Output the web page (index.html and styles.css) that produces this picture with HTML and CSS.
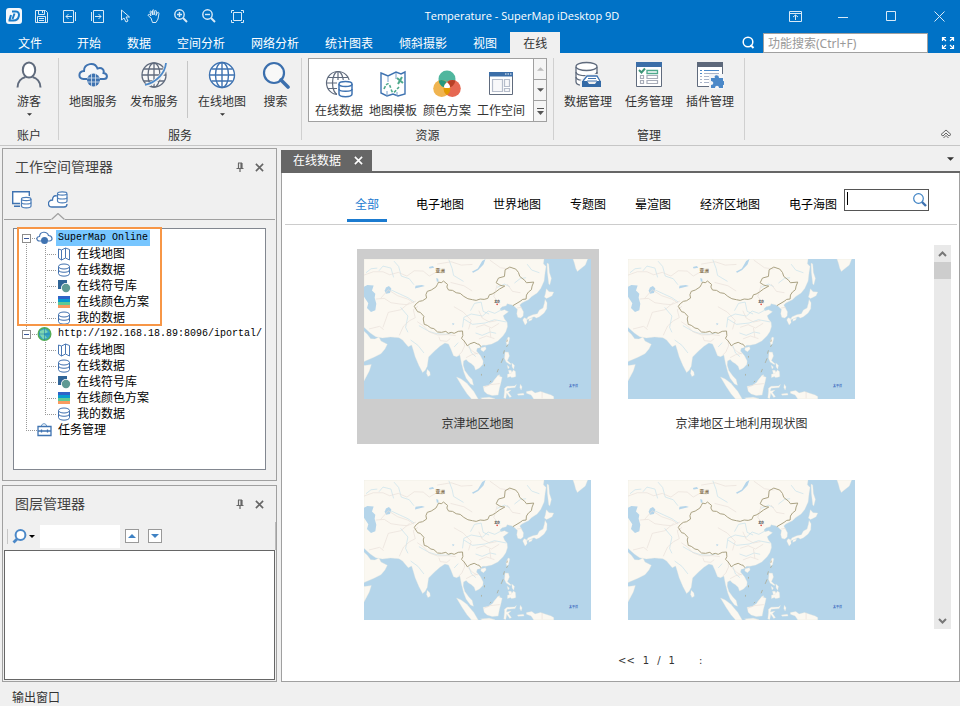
FILE: index.html
```html
<!DOCTYPE html>
<html lang="zh-CN">
<head>
<meta charset="utf-8">
<meta name="viewport" content="width=device-width, initial-scale=1">
<title>Temperature - SuperMap iDesktop 9D</title>
<link rel="stylesheet" href="styles.css">
</head>
<body>

<svg class="sprite" aria-hidden="true">
  <symbol id="i-close" viewBox="0 0 10 10"><path d="M1 1l8 8M9 1l-8 8" fill="none" stroke="currentColor" stroke-width="1.8"/></symbol>
  <symbol id="i-pin" viewBox="0 0 8 10"><path d="M2 1h4M2.500 1v5M5 1v5M6 1v5M0.500 6.500h7M4 6v4" fill="none" stroke="currentColor" stroke-width="1.200"/></symbol>
  <symbol id="i-down" viewBox="0 0 8 4"><path d="M0 0h8L4 4z" fill="currentColor"/></symbol>
  <symbol id="i-magnify" viewBox="0 0 28 28"><circle cx="12" cy="12" r="10" fill="#f8f8f8" stroke="currentColor" stroke-width="2.200"/><path d="M19 19l7 7" stroke="currentColor" stroke-width="3.600" stroke-linecap="round"/></symbol>
  <symbol id="t-map" viewBox="0 0 14 14"><path d="M1.500 2l3 1v10l-3-2zM4.500 3l4-2v10l-4 2M8.500 1l4 1.500v10.500l-4-2" fill="#fff" stroke="#4a78b4"/></symbol>
  <symbol id="t-db" viewBox="0 0 14 14"><path d="M1.500 3.500v7c0 3.500 11 3.500 11 0v-7" fill="#fff" stroke="#3f6fae"/><path d="M1.500 7c0 3 11 3 11 0" fill="none" stroke="#3f6fae"/><ellipse cx="7" cy="3.500" rx="5.500" ry="2.500" fill="#fff" stroke="#3f6fae"/></symbol>
  <symbol id="t-sym" viewBox="0 0 14 14"><path d="M1 1h9v9H1z" fill="#2f6497"/><circle cx="9" cy="9" r="5" fill="#fff"/><circle cx="9" cy="9" r="4.200" fill="#5f9a94"/></symbol>
  <symbol id="t-color" viewBox="0 0 14 14"><path d="M1 1h12v3H1z" fill="#2f63c8"/><path d="M1 4h12v3H1z" fill="#0a9bd0"/><path d="M1 7h12v3H1z" fill="#5fca96"/><path d="M1 10h12v3H1z" fill="#f99b60"/></symbol>
  <symbol id="map" viewBox="0 0 682 420">
    <path fill="#b5d5ea" d="M0 0h682v420H0z"/>
    <g fill="#fbf8f1" stroke="#e6e6df" stroke-width="1">
      <path d="M0 0H541L539 14 547 22 544 40 541 66 531 88 520 102 504 112 494 122 486 126 474 132 468 138 473 147 479 158 478 171 471 177 462 175 459 164 461 151 450 141 443 137 430 134 427 140 415 143 408 150 412 155 422 152 434 158 426 164 418 170 422 180 430 190 431 203 426 218 418 230 402 246 384 255 366 259 356 259 348 266 340 268 338 276 350 290 358 306 357 317 347 327 335 333 331 322 322 314 314 309 307 302 299 306 298 318 303 335 315 351 325 362 329 379 320 375 307 358 300 340 293 314 288 288 278 293 269 290 261 270 254 255 243 252 228 262 211 277 194 294 190 322 184 334 176 341 165 320 154 294 147 270 143 258 133 263 124 253 116 243 105 236 80 234 55 237 35 233 20 223 8 212 0 205z"/>
      <path d="M0 217L10 226 20 239 33 240 45 234 51 246 70 256 63 270 51 284 30 295 0 308z"/>
      <path d="M0 320L22 317 16 336 0 366z"/>
      <path d="M190 331l8 8 1 10-7 4-4-9z"/>
      <path d="M550 12l5 3 2 25 6 18-5 20-3-4-4-34z"/>
      <path d="M628 0h44l-7 18-13 10-11 9-5-10-3-12z"/>
      <path d="M548 89l8 9 14 1-5 11-10 5-7 3-6-4 3-10z"/>
      <path d="M544 121l6 10-1 18-8 13-14 11-9 4-7-4-14 6-8 3 3-8 15-7 14-3 6-11 11-6 4-14z"/>
      <path d="M481 176l8 3 1 12-6 7-7-15zM496 180l10-3-2 6-9 4z"/>
      <path d="M433 234l5 2-4 18-5 5-2-11z"/>
      <path d="M352 266l13-3 2 7-8 8-8-5z"/>
      <path d="M424 279l10 1 3 11-6 14 11 10-3 2-12-8-5-11z"/>
      <path d="M430 319l7 5-4 6zM444 312l8 7-2 12-5-7zM434 334l8 0 4 9-9 4zM408 350l-20 21 2-6 16-18z"/>
      <path d="M431 346l11-3 7-10 6 5 1 15-6 2-7 1-3-3-9 3z"/>
      <path d="M278 354l14 6 17 13 21 25 13 22h-20l-14-16-15-23z"/>
      <path d="M358 382l15-2 14-10 15-20 13 5-4 18-4 15-4 20-18 2-15-5-9-8z"/>
      <path d="M422 388l8-6 22-1 6-4-4 9-24 2-2 8 14-3-8 8 9 12-5 3-9-13-3 16-6-2 2-18z"/>
      <path d="M488 398l16-3 10 7 16-4 32 10 8 5v7h-60l-8-12-14-5z"/>
      <path d="M470 376l5 8-3 9-4-8zM461 405l18-2 2 5-18 1z"/>
      <path d="M350 417l26-2 18 4-10 1h-28z"/>
    </g>
    <g fill="#b5d5ea">
      <path d="M0 83l10-5 19 1-5 15 10 10-2 12 5 18-3 20-13 5-12-12 4-14-13-20z"/>
      <path d="M66 85l9-4 7 7-4 14-12 2-4-9z"/>
      <path d="M324 38l18-10 13-22 10-6-6 16-16 17-15 8z"/>
      <path d="M155 80l19-2 9 3-30 7zM195 24l12-3 4 5-14 2zM265 192l7 2-5 5zM217 57l6 2 1 8-5 1z"/>
    </g>
    <g fill="none" stroke="#c6e1ec" stroke-width="2">
      <path d="M90 6l14 16 8 29 24 8 14 18M255 2l10 27 4 20 30 18M45 35l12-14 24 6 8 28M490 15l14 18 23 8M6 41l15-12 19-2M110 145l22 26-7 34 7 15M165 200l30 17 22 7 27 2 20-4M296 205l4-30 22-10 34 6 17-15 20 7 22-12M320 155l12-22 20-4 6 28 18 8M335 222l20 7 24-10 18 4M452 72l18-14 17-2M300 180l26 16 38-4 28-10 36 7M180 282l-18-23-22-16M271 264l12-13M315 260l8 22 13 11M80 92l28 13 24 11 19 13M400 85l22-10 16 8"/>
    </g>
    <g fill="none" stroke="#e8e0da" stroke-width="2">
      <path d="M0 48l28-10 29 0 20 9 26-7 26 11 22-16 27 1 18 15 21-12 20 4M35 120l26-2 20 13 27 4 22 2 26-11M50 118l23-26 28 18 30 10 19 12M57 205l16-45 38-8 26-22M106 229l13-28 18-16 17-9-6-24 14-10M160 188l19 13 17 18 25 9 32-1 23 3M260 70l40 10 25 16M300 243l2 18-8 18-9 9M310 260l16 17 15 8M307 296l17-9 18-4M225 233l4 12 20 2 10-8M270 143l28 16 24 25-8 27M337 205l24-8 22 10 23-14M345 155l10 22 22 12 21-4M345 240l23-9 24 8M377 207l4 27M400 78l-10 34 18 24M430 75l16 22 24 4M220 15l42-7 30 10 34-2M378 3l32 23 30 4M15 210l32-8 12 10M360 385l20-8 28-3M460 147l14-2M535 398v20"/>
    </g>
    <g fill="none" stroke="#aaa283" stroke-width="3" stroke-linejoin="round">
      <path d="M151 142l6-8 9-7 10-2 12-8-2-10 4-10 12-4 14-9 4-7 4-8 8 2 7-5 12 10-2 8 5 9 12 1 11 7 12 2 11 9 12 7 14 3 11 2 12-4 12 1 11-3 5-11 8-2 10-6 12-9 16-9-8-1-7-2-11-7 7-14 18-5 2-20 14-8 18 6 8 10 4 12 15 12 5 7 22-2-5 12-2 11-9 7-6 9-1 12-10 1-8 6-22 13"/>
      <path d="M151 142l10 16 8 2 11 12-2 8 3 16 9 3 11 8 9 2 11 10 12 1 13-3 7 6 9-3 9 3 12-6 13-1 1 14-4 8 8 8 10 15 6-6 14-5 10 5 5 1 5 7"/>
      <path d="M431 242l-2 7M432 257l-4 7M422 274l-3 10M418 298l-6 14M404 330l-4 10M382 366l-4 4M353 345v5M362 316v6M362 291v5" stroke-width="2"/>
    </g>
    <circle cx="400" cy="136" r="2.500" fill="#e03a30"/>
  </symbol>
</svg>

<header class="titlebar">
  <span class="logo"><svg width="16" height="16" viewBox="0 0 16 16"><rect width="16" height="16" rx="3" fill="#f4f8fc"/><path d="M6 3.500h4c5 0 3.500 9-2.500 9H2.500M5 7l-1.500 5M8.500 5.500l-2 5.500" fill="none" stroke="#1b7cc8" stroke-width="2"/></svg></span>
  <nav class="quick" aria-label="快速访问">
    <button aria-label="保存"><svg width="13" height="13" viewBox="0 0 13 13"><path d="M.5.500h10l2 2v10H.5zM3.500.500v4h6v-4M7.500 1v2M2.500 12.500v-6h8v6M4 8.500h5M4 10.500h5"/></svg></button>
    <button aria-label="向左"><svg width="13" height="13" viewBox="0 0 13 13"><path d="M.5.500h10v12H.5zM12.500 2v9M9 6.500H3M5.500 4L3 6.500 5.500 9"/></svg></button>
    <button aria-label="向右"><svg width="13" height="13" viewBox="0 0 13 13"><path d="M2.500.500h10v12h-10zM.5 2v9M4 6.500h6M7.500 4L10 6.500 7.500 9"/></svg></button>
    <button aria-label="选择"><svg width="11" height="14" viewBox="0 0 11 14"><path d="M1.500 1v10l2.500-2 2 4 2-1-2-4h3.500z"/></svg></button>
    <button aria-label="漫游"><svg width="13" height="14" viewBox="0 0 13 14"><path d="M4 9L1.500 7C.5 6 1.500 5 2.500 5.500L4 7 3 3c0-1 1-1.500 1.500-.5L5.500 6V1.500c0-1 1.500-1 1.500 0V6l1-4c.5-1 1.500-.5 1.500.5L9 6.500l1.500-3c.5-.7 1.500 0 1.500.7L11 10l-2 3.500H5.500z"/></svg></button>
    <button aria-label="放大"><svg width="14" height="14" viewBox="0 0 14 14"><circle cx="5.500" cy="5.500" r="4.700" stroke-width="1.400"/><path d="M3 5.500h5M5.500 3v5" stroke-width="1.400"/><path d="M9 9l4 4" stroke-width="2"/></svg></button>
    <button aria-label="缩小"><svg width="14" height="14" viewBox="0 0 14 14"><circle cx="5.500" cy="5.500" r="4.700" stroke-width="1.400"/><path d="M3 5.500h5" stroke-width="1.400"/><path d="M9 9l4 4" stroke-width="2"/></svg></button>
    <button aria-label="全幅"><svg width="13" height="13" viewBox="0 0 13 13"><path d="M2.500 2.500h8v8h-8zM.5 3V.500H3M10 .500h2.500V3M12.500 10v2.500H10M3 12.500H.5V10"/></svg></button>
  </nav>
  <h1 class="title">Temperature - SuperMap iDesktop 9D</h1>
  <div class="winctl">
    <button aria-label="功能区显示"><svg width="13" height="11" viewBox="0 0 13 11"><path d="M.5.500h12v10H.5zM.5 2.500h12M6.500 9V4M4 6l2.500-2L9 6"/></svg></button>
    <button aria-label="最小化"><svg width="11" height="11" viewBox="0 0 11 11"><path d="M0 6.500h10"/></svg></button>
    <button aria-label="最大化"><svg width="11" height="11" viewBox="0 0 11 11"><path d="M.5.500h9v9h-9z"/></svg></button>
    <button aria-label="关闭"><svg width="11" height="11" viewBox="0 0 11 11"><path d="M.5.500l10 10M10.500.500l-10 10"/></svg></button>
  </div>
</header>

<div class="menubar">
  <nav class="menus">
    <button class="file">文件</button><button>开始</button><button>数据</button><button>空间分析</button><button>网络分析</button><button>统计图表</button><button>倾斜摄影</button><button>视图</button><button class="active">在线</button>
  </nav>
  <label class="find-icon" for="find" aria-label="功能搜索"><svg width="13" height="13" viewBox="0 0 13 13"><circle cx="6" cy="6" r="4.800" fill="none" stroke="#fff" stroke-width="1.500"/><path d="M8.500 9l3 3" stroke="#fff" stroke-width="2"/></svg></label>
  <input id="find" class="find" type="text" placeholder="功能搜索(Ctrl+F)">
  <button class="full" aria-label="全屏"><svg width="14" height="14" viewBox="0 0 14 14"><path d="M1.500 5V1.500H5M2 2l3 3M9 1.500h3.500V5M12 2L9 5M12.500 9v3.500H9M12 12L9 9M5 12.500H1.500V9M2 12l3-3" fill="none" stroke="#fff" stroke-width="1.200"/></svg></button>
</div>

<section class="ribbon">
  <div class="group g-account">
    <div class="tools">
      <button class="tool"><svg width="28" height="28" viewBox="0 0 28 28"><ellipse cx="14" cy="9" rx="6.200" ry="7.500" fill="#fff" stroke="#606b7d" stroke-width="2"/><path d="M2.500 26.500c0-6 4-9.500 8-10.500M25.500 26.500c0-6-4-9.500-8-10.500" fill="none" stroke="#606b7d" stroke-width="2"/></svg><span>游客</span><svg class="drop" width="5" height="3"><use href="#i-down"/></svg></button>
    </div>
    <div class="caption">账户</div>
  </div>
  <div class="group g-service">
    <div class="tools">
      <button class="tool"><svg width="30" height="28" viewBox="0 0 30 28"><path d="M9 18H5.500C0 17.500 0 10.500 6 10 6 2 17 .5 19.500 7.500 24 6 26.500 9 25.500 12c5 1 4 6 .5 6h-4" fill="#f5f6f8" stroke="#3f73b1" stroke-width="2"/><circle cx="15.500" cy="19" r="6.500" fill="#3f73b1"/><path d="M9 17h13M9 21h13M13.500 13v12M17.500 13v12" stroke="#d9e4f0" stroke-width=".8"/></svg><span>地图服务</span></button>
      <button class="tool"><svg width="28" height="28" viewBox="0 0 28 28"><g fill="none" stroke="#606b7d" stroke-width="1.300"><circle cx="14" cy="14" r="12" fill="#f8f8f8"/><ellipse cx="14" cy="14" rx="6" ry="12"/><path d="M14 2v24M2 14h24M4 8h20M4 20h20"/></g><path d="M26 3c0 8-8 18-21 22" fill="none" stroke="#f0f0f0" stroke-width="4"/><path d="M26 2c-1 10-9 19-21 22" fill="none" stroke="#4b88c8" stroke-width="1.800"/></svg><span>发布服务</span></button>
      <i class="rule"></i>
      <button class="tool wide"><svg width="28" height="28" viewBox="0 0 28 28"><g fill="none" stroke="#3f73b1" stroke-width="1.400"><circle cx="14" cy="14" r="12.500" fill="#fff"/><ellipse cx="14" cy="14" rx="6.500" ry="12.500"/><path d="M14 1.500v25M1.500 14h25M3.500 8h21M3.500 20h21"/></g></svg><span>在线地图</span><svg class="drop" width="5" height="3"><use href="#i-down"/></svg></button>
      <button class="tool narrow"><svg class="blue" width="28" height="28"><use href="#i-magnify"/></svg><span>搜索</span></button>
    </div>
    <div class="caption">服务</div>
  </div>
  <div class="group g-resource">
    <div class="gallery">
      <div class="items">
        <button class="tool"><svg width="28" height="28" viewBox="0 0 28 28"><g fill="none" stroke="#606b7d" stroke-width="1.200"><circle cx="13" cy="13" r="11.500"/><ellipse cx="13" cy="13" rx="5.500" ry="11.500"/><path d="M13 1.500v23M1.500 13h23M3 7.500h20M3 18.500h20"/></g><path d="M12 10h16v18H12z" fill="#fff"/><g fill="#fff" stroke="#3f73b1" stroke-width="1.500"><path d="M14 14v10c0 3.500 13 3.500 13 0V14"/><path d="M14 19c0 3 13 3 13 0" fill="none"/><ellipse cx="20.500" cy="14" rx="6.500" ry="2.500"/></g></svg><span>在线数据</span></button>
        <button class="tool"><svg width="28" height="28" viewBox="0 0 28 28"><path d="M2 3l7 3 8-4 5 2 4-2v22l-7 2-5-2-6 2-6-3z" fill="none" stroke="#3f73b1" stroke-width="1.400"/><path d="M9 6v6M17 3v6M8 21v5M18 22v4" stroke="#7aa0ca"/><path d="M5 19c3-7 5-7 7 0s4 2 8-2" fill="none" stroke="#4ea98c" stroke-width="1.600" stroke-dasharray="3 1.500"/><path d="M18 8l6 5M23 7l-4 7" stroke="#4ea98c" stroke-width="2"/></svg><span>地图模板</span></button>
        <button class="tool"><svg width="28" height="28" viewBox="0 0 28 28"><circle cx="14" cy="9" r="8.500" fill="#50b69e"/><circle cx="8.700" cy="18.500" r="8.500" fill="#f0b450"/><circle cx="19.300" cy="18.500" r="8.500" fill="#e66852"/><path d="M5.700 10.500a8.500 8.500 0 0 1 8 1.500 8.500 8.500 0 0 0-3 5.300 8.500 8.500 0 0 1-5-6.800z" fill="#26977c"/><path d="M22.300 10.500a8.500 8.500 0 0 0-8 1.500 8.500 8.500 0 0 1 3 5.300 8.500 8.500 0 0 0 5-6.800z" fill="#b84026"/><path d="M10.800 17.300a8.500 8.500 0 0 0 3.200 7.900 8.500 8.500 0 0 0 3.200-7.900 8.500 8.500 0 0 1-6.400 0z" fill="#e29a00"/><path d="M14 12.200a8.500 8.500 0 0 1 3.200 5.200 8.500 8.500 0 0 1-6.400 0A8.500 8.500 0 0 1 14 12.200z" fill="#fff"/></svg><span>颜色方案</span></button>
        <button class="tool"><svg width="28" height="28" viewBox="0 0 28 28"><path d="M2.500 3.500h23v21h-23z" fill="#fff" stroke="#606b7d"/><path d="M2 2h24v4.500H2z" fill="#3b6ea8"/><path d="M18 4h1.500M20.500 4H22M23 4h1.500" stroke="#fff"/><path d="M5.500 9.500h10v12h-10zM17.500 9.500h5v7h-5zM17.500 18.500h5v3h-5z" fill="#f8f8fa" stroke="#b6bdcb" stroke-width="1.200"/></svg><span>工作空间</span></button>
      </div>
      <div class="spin">
        <button aria-label="上一行" class="off"><svg width="7" height="4" viewBox="0 0 8 4"><path d="M0 4h8L4 0z" fill="currentColor"/></svg></button>
        <button aria-label="下一行"><svg width="7" height="4"><use href="#i-down"/></svg></button>
        <button aria-label="更多"><svg width="7" height="7" viewBox="0 0 7 7"><path d="M0 .500h7" stroke="currentColor"/><path d="M0 3h7L3.500 7z" fill="currentColor"/></svg></button>
      </div>
    </div>
    <div class="caption">资源</div>
  </div>
  <div class="group g-manage">
    <div class="tools">
      <button class="tool"><svg width="28" height="28" viewBox="0 0 28 28"><g fill="#fff" stroke="#606b7d" stroke-width="1.300"><path d="M2 6v15c0 5 21 5 21 0V6"/><path d="M2 11c0 5 21 5 21 0M2 16c0 5 21 5 21 0" fill="none"/><ellipse cx="12.500" cy="5.500" rx="10.500" ry="4"/></g><path d="M6 27v-7l7-7h11l4 7v7z" fill="#f0f0f0"/><path d="M9 20l4-5h10l3 5" fill="#fff" stroke="#3f73b1" stroke-width="1.300"/><path d="M14 17.500h8M13 20h10" stroke="#3f73b1"/><path d="M8 20h5l2 3h6l2-3h4v6H8z" fill="#346aa6"/></svg><span>数据管理</span></button>
      <button class="tool"><svg width="28" height="28" viewBox="0 0 28 28"><path d="M1.500 3.500h25v22h-25z" fill="#fff" stroke="#606b7d"/><path d="M1 1h26v5H1z" fill="#3b6ea8"/><path d="M12 9.500h10.500v3H12z" fill="none" stroke="#4ea98c" stroke-width="1.300"/><path d="M5.500 14.500h3v3h-3zM5.500 19.500h3v3h-3zM12 14.500h10.500v3H12zM12 19.500h10.500v3H12z" fill="none" stroke="#a8adb9" stroke-width="1.200"/><path d="M4 9l2.500 2.500L10 7.500" fill="none" stroke="#3d9477" stroke-width="2"/></svg><span>任务管理</span></button>
      <button class="tool"><svg width="28" height="28" viewBox="0 0 28 28"><path d="M1.500 2.500h25v23h-25z" fill="#fff" stroke="#606b7d"/><path d="M1 1h26v5H1z" fill="#5d687a"/><path d="M4 9.500h2M8 9.500h15M4 12.500h2" stroke="#4b88c8" stroke-width="1.200"/><path d="M8 12.500h15M4 15.500h2M8 15.500h9M4 18.500h2M8 18.500h7M4 21.500h2M8 21.500h5" stroke="#a9b4c9" stroke-width="1.200"/><path d="M13 13h15v15H13z" fill="#f4f5f7"/><path d="M15 17h4c-2-3 4-4 4 0h4v3c3 0 3 4 0 4v3h-4c0-3-4-3-4 0h-4v-3c3 0 3-4 0-4z" fill="#4b88c8"/></svg><span>插件管理</span></button>
    </div>
    <div class="caption">管理</div>
  </div>
  <button class="collapse" aria-label="折叠功能区"><svg width="12" height="10" viewBox="0 0 12 10"><path d="M1 5.500l5-4.500 5 4.500-2 1.500-3-3-3 3zM3.500 9L6 6.500 8.500 9" fill="none" stroke="#666" stroke-width="1"/></svg></button>
</section>

<main class="work">
  <aside class="side">
    <section class="panel panel-ws">
      <header class="phead"><h2>工作空间管理器</h2>
        <button aria-label="固定"><svg width="8" height="10"><use href="#i-pin"/></svg></button><button aria-label="关闭"><svg width="9" height="9"><use href="#i-close"/></svg></button></header>
      <div class="modes">
        <button aria-label="本地"><svg width="20" height="18" viewBox="0 0 20 18"><path d="M8 12.500H.7V.7h16.600V5M2 15.300h6" fill="#fff" stroke="#3f73b1" stroke-width="1.400"/><g fill="#fff" stroke="#4b7db8" stroke-width="1.200"><path d="M9.500 8v7c0 2.500 9.500 2.500 9.500 0V8"/><path d="M9.500 11.500c0 2 9.500 2 9.500 0" fill="none"/><ellipse cx="14.200" cy="8" rx="4.700" ry="1.600"/></g></svg></button>
        <button aria-label="在线"><svg width="20" height="18" viewBox="0 0 20 18"><path d="M9 5C6 4 4.500 6 4.500 9-1 9-.5 16 4 16h12c2 0 3-1 3-3" fill="#fff" stroke="#3f73b1" stroke-width="1.300"/><g fill="#fff" stroke="#4b7db8" stroke-width="1.200"><path d="M9.500 3v7c0 2.500 9.500 2.500 9.500 0V3"/><path d="M9.500 6.500c0 2 9.500 2 9.500 0" fill="none"/><ellipse cx="14.200" cy="2.500" rx="4.700" ry="1.600"/></g></svg></button>
      </div>
      <div class="notch"><i></i><svg width="14" height="7" viewBox="0 0 14 7"><path d="M.5 6.500L7 .5l6.500 6" fill="none" stroke="#a0a0a0" stroke-width="1.200"/></svg><i></i></div>
      <div class="tree">
        <ul class="roots">
          <li>
            <div class="node root"><button class="toggle" aria-label="折叠"></button><svg width="17" height="14" viewBox="0 0 17 14"><path d="M5 10H3.500C0 10 0 5.500 3.500 5.500 4 0 11 0 12.500 4.500 17 5 17 10 13.500 10H12" fill="#fff" stroke="#4a78b4" stroke-width="1.200"/><circle cx="8.500" cy="9.500" r="3.500" fill="#3f73b1"/></svg><span class="sel">SuperMap Online</span></div>
            <ul class="kids">
              <li class="node"><svg width="14" height="14"><use href="#t-map"/></svg><span>在线地图</span></li>
              <li class="node"><svg width="14" height="14"><use href="#t-db"/></svg><span>在线数据</span></li>
              <li class="node"><svg width="14" height="14"><use href="#t-sym"/></svg><span>在线符号库</span></li>
              <li class="node"><svg width="14" height="14"><use href="#t-color"/></svg><span>在线颜色方案</span></li>
              <li class="node"><svg width="14" height="14"><use href="#t-db"/></svg><span>我的数据</span></li>
            </ul>
          </li>
          <li>
            <div class="node root"><button class="toggle" aria-label="折叠"></button><svg width="17" height="14" viewBox="0 0 17 14"><circle cx="8.500" cy="7" r="6.300" fill="#36a3c4" stroke="#54ad55" stroke-width="1.400"/><path d="M4 4l5-2 3 3-4 2 3 4-4 1-3-4z" fill="#7fd6b2"/><path d="M8.500 1v12M3 7h11" stroke="#2380a8" stroke-width=".6"/></svg><span>http://192.168.18.89:8096/iportal/</span></div>
            <ul class="kids">
              <li class="node"><svg width="14" height="14"><use href="#t-map"/></svg><span>在线地图</span></li>
              <li class="node"><svg width="14" height="14"><use href="#t-db"/></svg><span>在线数据</span></li>
              <li class="node"><svg width="14" height="14"><use href="#t-sym"/></svg><span>在线符号库</span></li>
              <li class="node"><svg width="14" height="14"><use href="#t-color"/></svg><span>在线颜色方案</span></li>
              <li class="node"><svg width="14" height="14"><use href="#t-db"/></svg><span>我的数据</span></li>
            </ul>
          </li>
          <li>
            <div class="node root leaf"><svg width="17" height="14" viewBox="0 0 17 14"><path d="M5.500 3c0-3 5-3 5 0" fill="none" stroke="#5d8fc4"/><path d="M2 3.500h13v9H2z" fill="#fff" stroke="#3f73b1" stroke-width="1.300"/><path d="M2 8h13M5.500 6.500v3M11.500 6.500v3" stroke="#3f73b1" stroke-width="1.300"/></svg><span>任务管理</span></div>
          </li>
        </ul>
        <div class="marker"></div>
      </div>
    </section>

    <section class="panel panel-layer">
      <header class="phead"><h2>图层管理器</h2>
        <button aria-label="固定"><svg width="8" height="10"><use href="#i-pin"/></svg></button><button aria-label="关闭"><svg width="9" height="9"><use href="#i-close"/></svg></button></header>
      <div class="lbar">
        <button class="lsearch" aria-label="搜索图层"><svg width="15" height="15" viewBox="0 0 15 15"><circle cx="8.500" cy="6" r="4.900" fill="#fff" stroke="#4b88c8" stroke-width="2"/><path d="M5 10l-3.500 3.500" stroke="#4b88c8" stroke-width="2.800"/></svg><svg width="6" height="3"><use href="#i-down"/></svg></button>
        <input type="text" aria-label="图层名称">
        <button class="step" aria-label="上移"><svg width="8" height="4" viewBox="0 0 8 4"><path d="M0 4h8L4 0z" fill="#3f82c4"/></svg></button>
        <button class="step" aria-label="下移"><svg width="8" height="4" viewBox="0 0 8 4"><path d="M0 0h8L4 4z" fill="#3f82c4"/></svg></button>
      </div>
      <div class="lbox"></div>
    </section>
  </aside>

  <section class="doc">
    <div class="dtabs">
      <div class="dtab"><span>在线数据</span><button aria-label="关闭"><svg width="9" height="9"><use href="#i-close"/></svg></button></div>
      <button class="dlist" aria-label="窗口列表"><svg width="7" height="4"><use href="#i-down"/></svg></button>
    </div>
    <div class="page">
      <nav class="filters">
        <button class="on">全部</button><button>电子地图</button><button>世界地图</button><button>专题图</button><button>晕渲图</button><button>经济区地图</button><button>电子海图</button>
        <div class="search"><input type="text" aria-label="搜索"><i class="caret"></i><svg width="14" height="14" viewBox="0 0 14 14"><circle cx="5.500" cy="5.500" r="4.800" fill="none" stroke="#3f83c4" stroke-width="1.200"/><path d="M9 9l4 4" stroke="#3f73b1" stroke-width="2.400"/></svg></div>
      </nav>
      <div class="results">
        <div class="cards">
          <figure class="card picked"><svg class="map" viewBox="0 0 682 420"><use href="#map"/><text class="asia" x="215" y="40">亚洲</text><text class="city" x="391" y="132">北京</text><text class="sea" x="616" y="384">太平洋</text></svg><figcaption>京津地区地图</figcaption></figure>
          <figure class="card"><svg class="map" viewBox="0 0 682 420"><use href="#map"/><text class="asia" x="215" y="40">亚洲</text><text class="city" x="391" y="132">北京</text><text class="sea" x="616" y="384">太平洋</text></svg><figcaption>京津地区土地利用现状图</figcaption></figure>
          <figure class="card"><svg class="map" viewBox="0 0 682 420"><use href="#map"/><text class="asia" x="215" y="40">亚洲</text><text class="city" x="391" y="132">北京</text><text class="sea" x="616" y="384">太平洋</text></svg></figure>
          <figure class="card"><svg class="map" viewBox="0 0 682 420"><use href="#map"/><text class="asia" x="215" y="40">亚洲</text><text class="city" x="391" y="132">北京</text><text class="sea" x="616" y="384">太平洋</text></svg></figure>
        </div>
        <div class="scroll">
          <button aria-label="向上滚动"><svg width="9" height="6" viewBox="0 0 9 6"><path d="M1 5l3.500-3.500L8 5" fill="none" stroke="#777" stroke-width="2"/></svg></button>
          <i class="thumb"></i>
          <button class="end" aria-label="向下滚动"><svg width="9" height="6" viewBox="0 0 9 6"><path d="M1 1l3.500 3.500L8 1" fill="none" stroke="#777" stroke-width="2"/></svg></button>
        </div>
      </div>
      <div class="pager"><a href="#first">&lt;&lt;</a><span>1</span><span>/</span><span>1</span><a class="next" href="#next">:</a></div>
    </div>
  </section>
</main>

<footer class="status"><button>输出窗口</button></footer>
</body>
</html>
```
FILE: styles.css
```css
* { box-sizing: border-box; }
body {
  margin: 0;
  height: 100vh;
  display: flex;
  flex-direction: column;
  background: #f0f0f0;
  color: #333;
  font: 12px/16px "Noto Sans", "Noto Sans CJK SC", sans-serif;
  overflow: hidden;
}
button {
  border: 0;
  padding: 0;
  margin: 0;
  background: none;
  color: inherit;
  font: inherit;
}
svg { display: block; flex: none; }
.sprite { position: absolute; width: 0; height: 0; }
h1, h2, ul, figure { margin: 0; padding: 0; font-weight: normal; }
ul { list-style: none; }

/* title bar */
.titlebar, .menubar { display: flex; background: #0072c6; color: #fff; }
.titlebar { height: 32px; align-items: center; }
.logo { width: 27px; padding-left: 6px; }
.quick { display: flex; }
.quick button, .winctl button { display: grid; place-items: center; height: 32px; }
.quick button { width: 28px; }
.quick svg, .winctl svg { fill: none; stroke: #d9eaf7; }
.title { flex: 1; padding-left: 18px; text-align: center; font-size: 11px; white-space: nowrap; font-family: "Open Sans", "Noto Sans", sans-serif; }
.winctl { display: flex; gap: 8px; padding-right: 1px; }
.winctl button { width: 40px; }

/* menu tabs */
.menubar { height: 21px; }
.menus { display: flex; flex: 1; }
.menus button { padding: 2px 13px 0; height: 21px; white-space: nowrap; }
.menus .file { padding: 2px 22px 0 18px; }
.menus .active { background: #f0f0f0; color: #333; }
.find-icon { padding: 4px 8px 0 0; }
.find { width: 165px; height: 20px; margin-top: 1px; padding: 0 4px; border: 1px solid #a0a0a0; font: inherit; }
.find::placeholder { color: #999; opacity: 1; }
.full { width: 32px; display: grid; place-items: center; padding-left: 8px; }

/* ribbon */
.ribbon { display: flex; height: 93px; border-bottom: 1px solid #c6c6c6; padding-top: 5px; }
.group { display: flex; flex-direction: column; justify-content: space-between; height: 82px; border-right: 1px solid #d0d0d0; }
.tools { display: flex; justify-content: center; padding-top: 3px; }
.tool { width: 61px; display: flex; flex-direction: column; align-items: center; white-space: nowrap; }
.tool span { margin-top: 5px; }
.tool .drop { margin-top: 3px; }
.tool .blue { color: #3b6fad; }
.tool.wide { width: 67px; }
.tool.narrow { width: 40px; }
.caption { text-align: center; line-height: 16px; height: 12px; }
.g-account { width: 59px; }
.g-service { width: 243px; }
.g-service .tools { padding-right: 2px; }
.rule { width: 1px; height: 57px; background: #c6c6c6; margin: 0 1px 0 2px; }
.g-resource { width: 252px; padding: 0 6px; }
.g-manage { width: 191px; }
.gallery { display: flex; height: 64px; border: 1px solid #a0a0a0; background: #fff; }
.items { display: flex; flex: 1; padding: 11px 3px 0; }
.items .tool { width: 54px; }
.spin { width: 13px; display: flex; flex-direction: column; border-left: 1px solid #a0a0a0; background: #f5f5f5; color: #555; }
.spin button { flex: 1; display: grid; place-items: center; }
.spin button + button { border-top: 1px solid #a0a0a0; }
.spin .off { color: #bbb; }
.collapse { margin-left: auto; align-self: flex-end; padding: 0 8px 6px 0; }

/* work area */
.work { flex: 1; min-height: 0; display: grid; grid-template-columns: 277px 1fr; gap: 4px; padding-top: 2px; }
.side { display: flex; flex-direction: column; gap: 4px; padding-left: 2px; min-height: 0; }
.panel { border: 1px solid #a0a0a0; display: flex; flex-direction: column; }
.panel-ws { flex: 1; min-height: 0; }
.phead { display: flex; align-items: center; height: 36px; padding: 0 12px; color: #666; }
.phead h2 { flex: 1; font-size: 14px; line-height: 20px; color: #444; }
.phead button + button { margin-left: 11px; }
.modes { display: flex; gap: 16px; padding: 6px 9px 0; height: 28px; align-items: flex-start; }
.notch { display: flex; align-items: flex-end; padding: 0 1px; }
.notch i { height: 1px; background: #a0a0a0; flex: 1; }
.notch i:first-child { flex: none; width: 47px; }
.tree { position: relative; flex: 1; margin: 8px 10px 10px; border: 1px solid #828790; background: #fff; color: #000; padding: 1px 0 0 8px; }
.node { display: flex; align-items: center; height: 16px; white-space: nowrap; }
.node span { line-height: 16px; }
.root { font-family: "Liberation Mono", "Noto Sans CJK SC", monospace; font-size: 10px; }
.root span { margin-left: 3px; padding: 0 2px; }
.root .sel { background: #77c6ff; }
.root svg { margin-left: 5px; }
.root.leaf { font: inherit; padding-left: 9px; }
.toggle { width: 9px; height: 9px; border: 1px solid #8c8c8c; background: linear-gradient(#39579a, #39579a) center / 5px 1px no-repeat #fff; }
.kids { padding-left: 23px; }
.roots > li { background: repeating-linear-gradient(#999 0 1px, transparent 1px 2px) 4px 0 / 1px 100% no-repeat; }
.roots > li:last-child { background-size: 1px 8px; }
.roots > li:first-child { background-position: 4px 8px; }
.roots .root { background: repeating-linear-gradient(90deg, #999 0 1px, transparent 1px 2px) 4px 8px / 12px 1px no-repeat; }
.kids .node { padding-left: 12px; background: repeating-linear-gradient(#999 0 1px, transparent 1px 2px) 0 0 / 1px 100% no-repeat, repeating-linear-gradient(90deg, #999 0 1px, transparent 1px 2px) 0 8px / 11px 1px no-repeat; }
.kids .node:last-child { background-size: 1px 8px, 11px 1px; }
.kids .node span { margin-left: 6px; }
.marker { position: absolute; left: 3px; top: -2px; width: 145px; height: 99px; border: 2px solid #f79646; }

.lbar { display: flex; align-items: center; height: 28px; padding: 0 4px; border-right: 1px solid #bbb; }
.lsearch { display: flex; align-items: center; gap: 2px; padding: 0 4px; border-left: 1px solid #c6c6c6; margin-right: 1px; color: #000; }
.lbar input { width: 80px; height: 23px; border: 0; margin-right: 5px; }
.step { width: 14px; height: 14px; border: 1px solid #999; background: #fff; display: grid; place-items: center; margin-right: 9px; }
.lbox { height: 130px; border: 1px solid #666; background: #fff; margin: 0 1px 1px; }

/* document */
.doc { display: flex; flex-direction: column; min-width: 0; min-height: 0; }
.dtabs { display: flex; justify-content: space-between; height: 25px; padding-top: 2px; border-bottom: 2px solid #666; }
.dtab { display: flex; align-items: center; gap: 13px; padding: 0 9px 0 12px; background: #666; color: #fff; }
.dlist { padding: 0 6px 10px; color: #333; align-self: flex-end; }
.page { flex: 1; min-height: 0; display: flex; flex-direction: column; background: #fff; border: 1px solid #a0a0a0; border-top: 0; }
.filters { display: flex; align-items: flex-end; height: 52px; margin: 0 2px 0 3px; padding: 0 28px 2px 62px; gap: 29px; border-bottom: 1px solid #ccc; color: #000; white-space: nowrap; }
.filters button { padding-bottom: 8px; height: 27px; }
.filters .on { color: #1b7bd0; padding: 0 8px 5px; border-bottom: 3px solid #1b7bd0; }
.search { position: relative; display: flex; align-items: center; justify-content: flex-end; flex: 1; height: 22px; border: 1px solid #555; margin: 0 0 11px -22px; }
.search input { flex: 1; min-width: 0; width: 0; height: 18px; border: 0; outline: 0; }
.search svg { margin-right: 1px; }
.caret { position: absolute; left: 2px; top: 2px; width: 1px; height: 13px; background: #000; }
.results { flex: 1; min-height: 0; display: flex; margin: 20px 8px 0 0; overflow: hidden; }
.cards { flex: 1; display: grid; grid-template-columns: 242px 242px; grid-auto-rows: 195px; gap: 26px 22px; padding: 4px 0 0 75px; align-content: start; }
.card { padding: 10px 8px 10px 7px; text-align: center; }
.card.picked { background: #cdcdcd; }
.map { width: 100%; aspect-ratio: 227 / 140; }
.map text { font-family: "Noto Sans CJK SC", sans-serif; font-weight: bold; }
.map .asia { font-size: 14px; fill: #85704d; }
.map .city { font-size: 9px; fill: #222; }
.map .sea { font-size: 9px; fill: #3565bd; }
.card figcaption { margin-top: 17px; }
.scroll { width: 17px; display: flex; flex-direction: column; background: #e9e9e9; }
.scroll button { height: 17px; display: grid; place-items: center; }
.scroll .end { margin-top: auto; }
.thumb { height: 17px; background: #cdcdcd; }
.pager { display: flex; gap: 8px; height: 52px; padding: 24px 0 0 336px; font: 10px/16px "DejaVu Sans", sans-serif; }
.pager a { color: inherit; text-decoration: none; }
.pager .next { margin-left: 16px; }

.status { height: 24px; padding: 8px 12px 0; }
```
